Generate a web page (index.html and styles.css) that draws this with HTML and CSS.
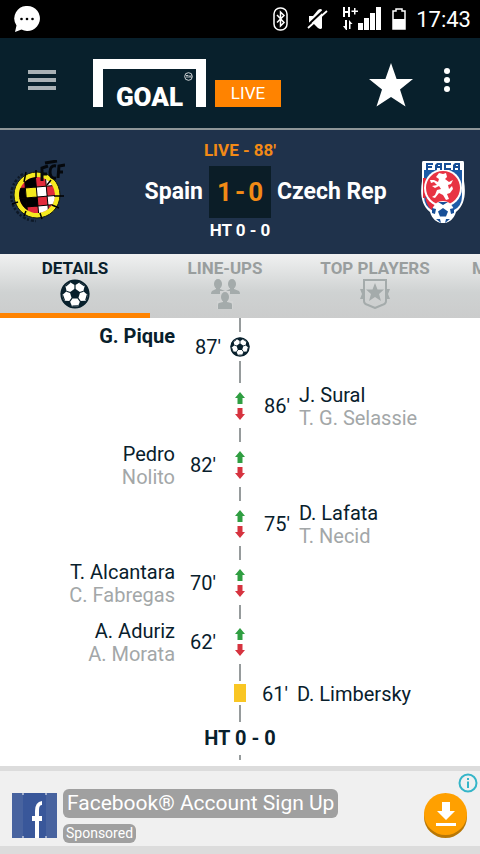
FILE: index.html
```
<!DOCTYPE html>
<html lang="en">
<head>
    <meta charset="UTF-8">
    <meta name="viewport" content="width=device-width, initial-scale=1.0">
    <title>Goal Live</title>
    <link rel="stylesheet" href="styles.css">
</head>
<body>
    <!-- shared icons -->
    <svg class="sprite" aria-hidden="true">
        <symbol id="ball" viewBox="0 0 30 30">
            <circle cx="15" cy="15" r="13.6" fill="#fff" stroke="#08202c" stroke-width="2"/>
            <path d="M15 9.500l5.200 3.800-2 6.200h-6.400l-2-6.200z" fill="#08202c"/>
            <g id="patch" fill="#08202c" stroke="#08202c">
                <path d="M15 6.200L10.500 3.500 10.500 1.500 15 1 19.500 1.500 19.500 3.500z" stroke="none"/>
                <path d="M15 6v4M19.500 3.500l4.800 3.200" stroke-width="1.200"/>
            </g>
            <use href="#patch" transform="rotate(72 15 15)"/>
            <use href="#patch" transform="rotate(144 15 15)"/>
            <use href="#patch" transform="rotate(216 15 15)"/>
            <use href="#patch" transform="rotate(288 15 15)"/>
        </symbol>
        <symbol id="swap" viewBox="0 0 10 30">
            <path d="M5 1l5 6H7.500v6h-5V7H0z" fill="#2f9e41"/>
            <path d="M5 29l5-6H7.500v-6h-5v6H0z" fill="#d6333f"/>
        </symbol>
    </svg>

    <div class="status-bar">
        <svg class="chat" viewBox="0 0 26 27">
            <path d="M13.500 0a12.500 12.500 0 1 1-6 23.500L1 26l1.500-6.500A12.500 12.500 0 0 1 13.500 0z" fill="#fff"/>
            <g fill="#000"><circle cx="7.500" cy="13" r="1.300"/><circle cx="13" cy="13" r="1.300"/><circle cx="18.500" cy="13" r="1.300"/></g>
        </svg>
        <div class="status-icons">
            <svg width="15" height="24" viewBox="0 0 15 24" fill="none" stroke="#fff" stroke-width="1.500">
                <rect x="1" y="1" width="13" height="22" rx="6"/>
                <path d="M4 8l7 7.500-3.500 3.500V5L11 8.500 4 15.500"/>
            </svg>
            <svg class="mute" width="21" height="22" viewBox="0 0 21 22">
                <path d="M2 8h4l5-6q3-2 4 0v18q-1 2-4 0l-5-5H2z" fill="#fff"/>
                <path d="M0 18L18 1" stroke="#000" stroke-width="2"/>
                <path d="M1 20L20 3" stroke="#fff" stroke-width="1.800"/>
            </svg>
            <svg class="signal" width="40" height="24" viewBox="0 0 40 24" fill="#fff">
                <path d="M1 0h2v4h3V0h2v10H6V6H3v4H1zM12 1h1.500v2.500H16V5h-2.500v2.500H12V5H9.500V3.500H12z"/>
                <path d="M4 23L1 19h2v-6h2v10zM7 13l3.500 4h-2v5H7z"/>
                <path d="M16 16h5v7h-5zM22 11h5v12h-5zM28 6h5v17h-5zM34 0h5v23h-5z"/>
            </svg>
            <svg class="battery" width="14" height="22" viewBox="0 0 14 22">
                <path d="M1 3h3V1h6v2h3v18H1z" fill="none" stroke="#fff" stroke-width="1.500"/>
                <path d="M1 11h12v10H1z" fill="#fff"/>
            </svg>
            <span class="clock">17:43</span>
        </div>
    </div>

    <header class="header">
        <button class="menu" aria-label="Menu"><span></span><span></span><span></span></button>
        <div class="logo">
            <span class="logo-name">GOAL</span>
            <svg class="tm" viewBox="0 0 9 9"><circle cx="4.500" cy="4.500" r="3.800" fill="none" stroke="#fff" stroke-width=".8"/><path d="M2 3.500h2M3 3.500v2.500M5 6V3.500l1 1 1-1V6" fill="none" stroke="#fff" stroke-width=".7"/></svg>
        </div>
        <span class="live-badge">LIVE</span>
        <button class="favourite" aria-label="Favourite">
            <svg width="44" height="44" viewBox="0 0 44 44"><path d="M22 0l5.600 16H44L31 26.500 36.500 43.500 22 34 7.500 43.500 13 26.500 0 16h16.400z" fill="#fff"/></svg>
        </button>
        <button class="more" aria-label="More options"><span></span><span></span><span></span></button>
    </header>

    <section class="match">
        <svg class="crest" width="56" height="64" viewBox="0 0 56 64">
            <path d="M14 14A25.500 25.500 0 0 0 27 61" fill="none" stroke="#0d1826" stroke-width="2.500" stroke-dasharray="3 1.500 2 2"/>
            <circle cx="28" cy="35" r="23" fill="#f5ea1f" stroke="#14180f"/>
            <clipPath id="globe"><circle cx="28" cy="35" r="18"/></clipPath>
            <g clip-path="url(#globe)" transform="rotate(-5 28 35)">
                <path d="M10 17h36v36H10z" fill="#e12b3c"/>
                <path d="M17 17h11v10H17zM10 27h7v10h-7zM17 37h11v9H17zM10 46h7v8h-7z" fill="#000"/>
                <path d="M10 37h7v9h-7z" fill="#000"/>
                <path d="M17 27h11v10H17z" fill="#f5ea1f"/>
                <path d="M28 27h10v10H28zM38 17h9v10h-9zM38 37h9v9h-9zM28 46h10v8H28z" fill="#fff"/>
                <path d="M17 17v36M28 17v36M38 17v36M10 27h36M10 37h36M10 46h36" stroke="#000"/>
            </g>
            <path d="M17 12l-2 10M27 10v8M42 20l-4 5M45 36h10M43 45l7 3M31 53l2 6M17 51l-2 5M9 42l-6 2" stroke="#000" stroke-width="1.500"/>
            <path d="M33 21V8l6-2M33 14h5M47 6q-6-1-6 6t6 6M49 18l1-12 6-1M50 12h4M36 3l12-2" fill="none" stroke="#05080c" stroke-width="3"/>
        </svg>
        <div class="scoreboard">
            <div class="match-status">LIVE - 88'</div>
            <div class="score-row">
                <span class="team home">Spain</span>
                <span class="score"><span>1</span> <span>-</span> <span>0</span></span>
                <span class="team">Czech Rep</span>
            </div>
            <div class="half-time">HT 0 - 0</div>
        </div>
        <svg class="crest" width="44" height="62" viewBox="0 0 44 62">
            <path d="M2 0h40q1 0 1 2v18c2 12 1 24-8 31-2 7-7 11-13 11s-11-4-13-11C0 44-1 32 1 20V2q0-2 1-2z" fill="#fff"/>
            <path d="M3 9h38v26q0 10-8 14H11Q3 45 3 35z" fill="#1d5ba7"/>
            <path d="M4 36q2 10 8 14l5-7zM2 17h3v20H2z" fill="#e12b3c"/>
            <circle cx="22" cy="27" r="19" fill="#fff"/>
            <circle cx="22" cy="27" r="17" fill="#e83343"/>
            <path d="M5 2h7v2H7v1h4v2H7v2H5zM14 9V4l2-2h5v7h-2V7h-3v2zM17 4v1h2V4zM23 2h7v2h-5v3h5v2h-7zM32 9V4l2-2h5v7h-2V7h-3v2zM35 4v1h2V4z" fill="#174f98" fill-rule="evenodd"/>
            <path d="M18 12l4 1 3-1 1 4-2 2 4 3 4-2-2 4-3 1 1 4 3-3 1 3-3 4-3 1 2 5-3 1-3-5-4-2-4 5-3-1 3-2 2-5 4-1-2-3-4 2-3-2 5-1-3-3-3 1-1-3 4 0 4 2 1-3-3-2z" fill="#fff"/>
            <circle cx="22" cy="51" r="11" fill="#fff"/>
            <path d="M22 47l5 3.500-2 5h-6l-2-5zM17 41h10l-5 3zM11 47l4 1-1 5-3-1zM33 47l-4 1 1 5 3-1zM15 58l4 0 1 4zM29 58l-4 0-1 4z" fill="#174f98"/>
        </svg>
    </section>

    <nav class="tabs">
        <button class="tab active">DETAILS
            <svg width="30" height="30"><use href="#ball"/></svg>
        </button>
        <button class="tab">LINE-UPS
            <svg width="30" height="30" viewBox="0 0 30 30" fill="#a4abab">
                <g id="person">
                    <ellipse cx="8" cy="5" rx="4" ry="5"/>
                    <path d="M6 8h4v2l5 2q1 1 1 3H1q0-2 1-3l4-2z"/>
                </g>
                <use href="#person" x="14"/>
                <path d="M10 12h10v10h3v8H7v-8h3z" fill="#d2d4d4"/>
                <ellipse cx="15" cy="18" rx="4" ry="5"/>
                <path d="M13 21h4v2l4 1q1 0 1 2v4H8v-4q0-2 1-2l4-1z"/>
            </svg>
        </button>
        <button class="tab">TOP PLAYERS
            <svg width="30" height="30" viewBox="0 0 30 30" fill="#a4abab">
                <path d="M0 10h4v10H0l2-5zM30 10h-4v10h4l-2-5z"/>
                <path d="M4 1h22v21q0 3-4 4l-7 3-7-3q-4-1-4-4z" fill="none" stroke="#a4abab" stroke-width="2"/>
                <path d="M15 4l2.500 6.500H24L19 15l2 7-6-4-6 4 2-7-5-4.500h6.500z"/>
            </svg>
        </button>
        <button class="tab cut">M</button>
    </nav>

    <main class="timeline">
        <div class="line"></div>
        <div class="event goal">
            <div class="side left"><div class="names"><b>G. Pique</b></div><span class="minute">87'</span></div>
            <svg width="20" height="20"><use href="#ball"/></svg>
        </div>
        <div class="line long"></div>
        <div class="event">
            <svg width="10" height="30"><use href="#swap"/></svg>
            <div class="side right"><span class="minute">86'</span><div class="names">J. Sural<span class="off">T. G. Selassie</span></div></div>
        </div>
        <div class="line"></div>
        <div class="event">
            <div class="side left"><div class="names">Pedro<span class="off">Nolito</span></div><span class="minute">82'</span></div>
            <svg width="10" height="30"><use href="#swap"/></svg>
        </div>
        <div class="line"></div>
        <div class="event">
            <svg width="10" height="30"><use href="#swap"/></svg>
            <div class="side right"><span class="minute">75'</span><div class="names">D. Lafata<span class="off">T. Necid</span></div></div>
        </div>
        <div class="line"></div>
        <div class="event">
            <div class="side left"><div class="names">T. Alcantara<span class="off">C. Fabregas</span></div><span class="minute">70'</span></div>
            <svg width="10" height="30"><use href="#swap"/></svg>
        </div>
        <div class="line"></div>
        <div class="event">
            <div class="side left"><div class="names">A. Aduriz<span class="off">A. Morata</span></div><span class="minute">62'</span></div>
            <svg width="10" height="30"><use href="#swap"/></svg>
        </div>
        <div class="line medium"></div>
        <div class="event booking">
            <span class="yellow-card"></span>
            <div class="side right"><span class="minute">61'</span><div>D. Limbersky</div></div>
        </div>
        <div class="line medium"></div>
        <div class="period">HT 0 - 0</div>
        <div class="line short"></div>
    </main>

    <aside class="ad">
        <svg class="ad-logo" width="45" height="45" viewBox="0 0 45 45">
            <path d="M0 0h45v45H0z" fill="#48639f"/>
            <path d="M11 0h23v45H11z" fill="#39579a"/>
            <path d="M11 0v2M34 0v2M11 43v2M34 43v2" stroke="#fff"/>
            <path d="M23 45V28h-3v-5h3v-5q0-9 7-10v4q-3 0-3 5v6h3v5h-3v17z" fill="#fff"/>
        </svg>
        <div class="ad-text">
            <span class="ad-title">Facebook® Account Sign Up</span>
            <span class="ad-label">Sponsored</span>
        </div>
        <button class="download" aria-label="Download">
            <svg width="20" height="24" viewBox="0 0 20 24" fill="#fff"><path d="M6 0h8v9h5l-9 9-9-9h5zM0 21h20v3H0z"/></svg>
        </button>
        <button class="ad-info" aria-label="Ad information">
            <svg width="20" height="20" viewBox="0 0 20 20"><circle cx="10" cy="10" r="8.500" fill="none" stroke="#35b5c8" stroke-width="2"/><path d="M10 5v2M10 8.500V15" stroke="#35b5c8" stroke-width="2"/></svg>
        </button>
    </aside>
</body>
</html>
```
FILE: styles.css
```
* {
    box-sizing: border-box;
}
body {
    margin: 0;
    min-height: 100vh;
    display: flex;
    flex-direction: column;
    font-family: Roboto, "Liberation Sans", sans-serif;
    background: #fff;
    color: #08202c;
    overflow-x: hidden;
}
button {
    padding: 0;
    border: 0;
    background: none;
    font-family: inherit;
    cursor: pointer;
}
svg {
    display: block;
    flex: none;
}
.sprite {
    position: absolute;
    width: 0;
    height: 0;
}

/* status bar */
.status-bar {
    display: flex;
    justify-content: space-between;
    align-items: center;
    height: 38px;
    padding: 0 9px 0 14px;
    background: #000;
    color: #fff;
}
.chat {
    width: 26px;
    height: 27px;
}
.status-icons {
    display: flex;
    align-items: center;
}
.mute {
    margin-left: 19px;
}
.signal {
    margin-left: 14px;
}
.battery {
    margin-left: 10px;
}
.clock {
    margin-left: 10px;
    font-size: 22px;
}

/* header */
.header {
    display: flex;
    align-items: flex-end;
    height: 92px;
    padding: 0 30px 21px 28px;
    background: #08202c;
    border-bottom: 2px solid #8e9698;
}
.menu {
    display: flex;
    flex-direction: column;
    gap: 4px;
    margin-bottom: 17px;
}
.menu span {
    width: 28px;
    height: 4px;
    background: #a9b1b5;
}
.logo {
    display: flex;
    align-items: flex-end;
    justify-content: center;
    position: relative;
    width: 113px;
    height: 48px;
    margin-left: 37px;
    border: 10px solid #fff;
    border-bottom: 0;
}
.logo-name {
    color: #fff;
    font-size: 26px;
    font-weight: 900;
    line-height: 20px;
}
.tm {
    position: absolute;
    top: 3px;
    right: 3px;
    width: 9px;
    height: 9px;
}
.live-badge {
    width: 66px;
    margin-left: 9px;
    background: #ff8300;
    color: #fff;
    font-size: 17px;
    line-height: 27px;
    text-align: center;
}
.favourite {
    margin-left: auto;
}
.more {
    display: flex;
    flex-direction: column;
    gap: 3px;
    margin: 0 0 15px 31px;
}
.more span {
    width: 6px;
    height: 6px;
    border-radius: 50%;
    background: #fff;
}

/* match score */
.match {
    display: grid;
    grid-template-columns: 56px 1fr 56px;
    align-items: center;
    height: 124px;
    padding: 0 9px;
    background: #1f324b;
    color: #fff;
}
.crest {
    justify-self: center;
}
.scoreboard {
    padding-bottom: 4px;
    text-align: center;
    font-size: 17px;
    font-weight: 700;
    line-height: 20px;
}
.match-status {
    color: #f28a16;
}
.score-row {
    display: grid;
    grid-template-columns: 1fr 62px 1fr;
    align-items: center;
    gap: 6px;
    margin: 6px 0 2px;
    font-size: 23px;
    text-align: left;
}
.home {
    text-align: right;
}
.score {
    display: flex;
    justify-content: center;
    gap: 3px;
    background: #0b1d27;
    color: #f28a16;
    font-size: 26px;
    line-height: 52px;
}

/* tabs */
.tabs {
    display: flex;
    height: 64px;
    overflow: hidden;
    background: linear-gradient(#f0f1f1, #cfd2d2 60%, #cbcccc);
}
.tab {
    display: flex;
    flex-direction: column;
    align-items: center;
    gap: 1px;
    flex: 0 0 150px;
    padding-top: 4px;
    color: #999e9e;
    font-size: 17px;
    font-weight: 700;
    line-height: 20px;
    border-bottom: 5px solid transparent;
}
.active {
    color: #08202c;
    border-color: #ff8300;
}
.cut {
    align-items: flex-start;
    padding-left: 22px;
}

/* timeline */
.timeline {
    display: flex;
    flex-direction: column;
    flex: 1;
    font-size: 20px;
    line-height: 23px;
}
.line {
    width: 2px;
    height: 14px;
    margin: 0 auto;
    background: #969b9c;
}
.long {
    height: 22px;
}
.medium {
    height: 17px;
}
.short {
    height: 5px;
}
.event {
    display: grid;
    grid-template-columns: 1fr 48px 1fr;
    grid-template-rows: 100%;
    align-items: center;
    justify-items: center;
    height: 45px;
}
.event > svg,
.yellow-card {
    grid-column: 2;
    grid-row: 1;
}
.goal {
    grid-template-columns: 1fr 38px 1fr;
    height: 29px;
}
.booking {
    grid-template-columns: 1fr 44px 1fr;
    height: 24px;
}
.side {
    display: flex;
    align-items: center;
    grid-row: 1;
    padding-top: 2px;
}
.left {
    grid-column: 1;
    justify-self: end;
    gap: 15px;
    text-align: right;
}
.goal .left {
    gap: 20px;
}
.right {
    grid-column: 3;
    justify-self: start;
    gap: 9px;
}
.names {
    height: 46px;
}
.off {
    display: block;
    color: #a3a7a8;
}
.yellow-card {
    width: 12px;
    height: 18px;
    background: #f9c623;
}
.period {
    font-weight: 700;
    line-height: 33px;
    text-align: center;
}

/* ad banner */
.ad {
    display: flex;
    align-items: center;
    position: relative;
    height: 88px;
    padding: 14px 13px 0 12px;
    background: #f0f0f0;
    border-top: 5px solid #dcdcdc;
    border-bottom: 8px solid #dcdcdc;
}
.ad-text {
    display: flex;
    flex-direction: column;
    align-items: flex-start;
    gap: 6px;
    margin-left: 6px;
    color: #fff;
}
.ad-text span {
    border-radius: 6px;
    background: #a0a0a0;
}
.ad-title {
    padding: 0 4px;
    font-size: 21px;
    line-height: 29px;
}
.ad-label {
    padding: 0 3px;
    font-size: 14px;
    line-height: 19px;
}
.download {
    display: flex;
    align-items: center;
    justify-content: center;
    width: 43px;
    height: 42px;
    margin: 0 0 4px auto;
    border-radius: 50%;
    background: #ffa000;
    box-shadow: 0 3px #b97705;
}
.ad-info {
    position: absolute;
    top: 2px;
    right: 2px;
}
```
